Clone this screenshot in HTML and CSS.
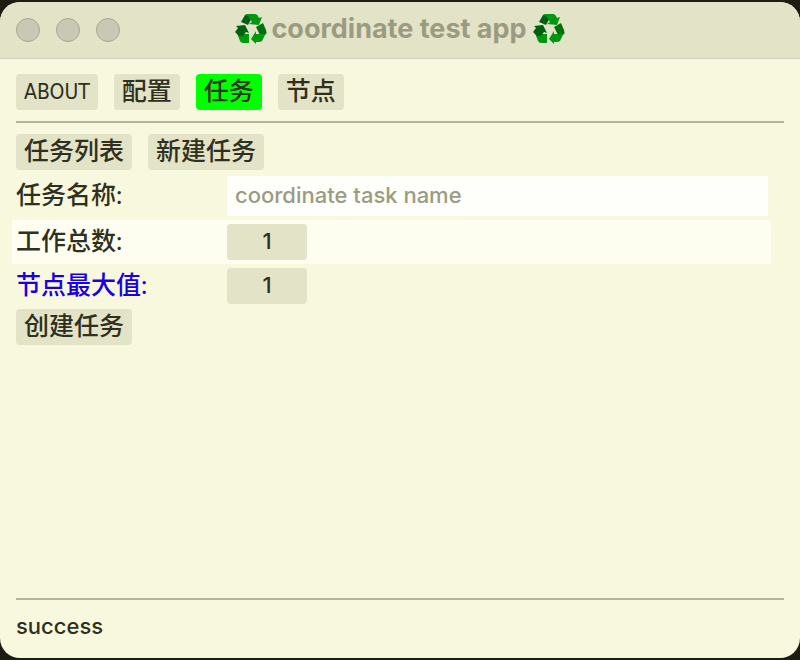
FILE: index.html
```html
<!DOCTYPE html>
<html lang="zh-CN">
<head>
    <meta charset="UTF-8">
    <meta name="viewport" content="width=device-width, initial-scale=1.0">
    <title>coordinate test app</title>
    <link rel="stylesheet" href="styles.css">
</head>
<body>

    <svg width="0" height="0" class="defs" aria-hidden="true">
        <symbol id="recycle" viewBox="0 0 32 30">
            <!-- top arm -->
            <path fill="#00600f" d="M6 8 L10 1 L15 0 L17 4 L13 11 Z"/>
            <path fill="#00980f" d="M10 1 Q11 0 13 0 L20 0 Q22 0 23 2 L24 4 L27 3 L24 11 L14 10 L17 8 L13 2 Z"/>
            <!-- left arm -->
            <path fill="#00980f" d="M2 19 L5 27 Q6 29 8 29 H14 V20 H5 Z"/>
            <path fill="#00600f" d="M1 12 L10 11 L14 19 L11 18 L8 22 H4 L0 18 L3 14 Z"/>
            <!-- right arm -->
            <path fill="#00700f" d="M21 13 L28 9 L31 16 Q32 19 31 20 Q29 22 25 21 Z"/>
            <path fill="#00980f" d="M31 19 L27 27 Q26 28 24 28 H21 V30 L16 25 L21 17 V20 H26 Q29 21 31 19 Z"/>
        </symbol>
    </svg>

    <div class="window">
        <header class="title-bar">
            <div class="lights">
                <span class="light"></span>
                <span class="light"></span>
                <span class="light"></span>
            </div>
            <h1 class="title">
                <svg class="recycle"><use href="#recycle"/></svg>
                <span>coordinate test app</span>
                <svg class="recycle last"><use href="#recycle"/></svg>
            </h1>
        </header>

        <nav class="tabs">
            <button type="button" class="latin">ABOUT</button>
            <button type="button">配置</button>
            <button type="button" class="active">任务</button>
            <button type="button">节点</button>
        </nav>

        <main class="content">
            <div class="sub-tabs">
                <button type="button">任务列表</button>
                <button type="button">新建任务</button>
            </div>
            <form class="task-form">
                <div class="row name-row">
                    <label for="task-name">任务名称:</label>
                    <input type="text" id="task-name" placeholder="coordinate task name" autocomplete="off">
                </div>
                <div class="row striped">
                    <label for="job-total">工作总数:</label>
                    <input type="text" inputmode="numeric" id="job-total" class="drag-value" value="1">
                </div>
                <div class="row">
                    <label for="node-max" class="link">节点最大值:</label>
                    <input type="text" inputmode="numeric" id="node-max" class="drag-value" value="1">
                </div>
                <button type="button" class="create">创建任务</button>
            </form>
        </main>

        <footer class="status">success</footer>
    </div>

</body>
</html>
```

FILE: styles.css
```css
* {
    box-sizing: border-box;
}
body {
    margin: 0;
    padding: 2px 0;
    min-height: 100vh;
    display: flex;
    background: #1c1c10;
    color: #303020;
    font-family: Lato, "Noto Sans CJK SC", sans-serif;
    font-size: 25px;
    font-weight: 500;
}
.defs {
    position: absolute;
}
.window {
    flex: 1;
    display: flex;
    flex-direction: column;
    border-radius: 20px;
    overflow: hidden;
    background: #f8f8de;
}
.title-bar {
    position: relative;
    display: flex;
    align-items: center;
    justify-content: center;
    height: 57px;
    background: #e3e3c8;
    border-bottom: 1px solid #d2d2bc;
}
.lights {
    position: absolute;
    left: 16px;
    display: flex;
    gap: 16px;
}
.light {
    width: 24px;
    height: 24px;
    border-radius: 50%;
    background: #c8c8b4;
    border: 1px solid #a6a694;
}
.title {
    display: flex;
    align-items: center;
    gap: 4px;
    margin: 0;
    padding-bottom: 2px;
    color: #9b9b82;
    font: bold 27px/32px Inter, "Liberation Sans", sans-serif;
}
.recycle {
    width: 32px;
    height: 30px;
}
.recycle.last {
    margin-left: 2px;
}
button {
    height: 36px;
    padding: 0 8px 4px;
    border: none;
    border-radius: 4px;
    background: #e3e3c8;
    color: inherit;
    font: inherit;
    line-height: 32px;
    cursor: pointer;
}
button.active {
    background: #00ff00;
}
.latin {
    padding-bottom: 0;
    font-family: "DejaVu Sans Condensed", "Open Sans", sans-serif;
    font-size: 21px;
}
.tabs {
    display: flex;
    gap: 16px;
    margin: 0 16px;
    padding: 15px 0 11px;
    border-bottom: 2px solid #b2b2a0;
}
.content {
    flex: 1;
    padding: 11px 16px;
}
.sub-tabs {
    display: flex;
    gap: 16px;
    margin-bottom: 6px;
}
.row {
    display: grid;
    grid-template-columns: 211px 1fr;
    align-items: center;
    height: 44px;
    line-height: 36px;
}
.row label {
    padding-bottom: 4px;
}
.name-row {
    height: 40px;
    margin-bottom: 4px;
}
.striped {
    margin: 0 13px 0 -4px;
    padding-left: 4px;
    background: #fdfdf0;
}
.link {
    color: #1a00e0;
}
input {
    border: none;
    background: #fefefa;
    color: inherit;
    font: 500 22px Inter, "Noto Sans CJK SC", sans-serif;
}
input::placeholder {
    color: #9b9b82;
    opacity: 1;
}
#task-name {
    height: 40px;
    margin-right: 16px;
    padding: 0 8px 2px;
}
.drag-value {
    width: 80px;
    height: 36px;
    padding: 0 0 2px;
    border-radius: 4px;
    background: #e3e3c8;
    text-align: center;
}
.create {
    margin-top: 1px;
}
.status {
    margin: 0 16px;
    padding: 8px 0 14px;
    border-top: 2px solid #b2b2a0;
    font: 500 22px/36px Inter, sans-serif;
}
```
